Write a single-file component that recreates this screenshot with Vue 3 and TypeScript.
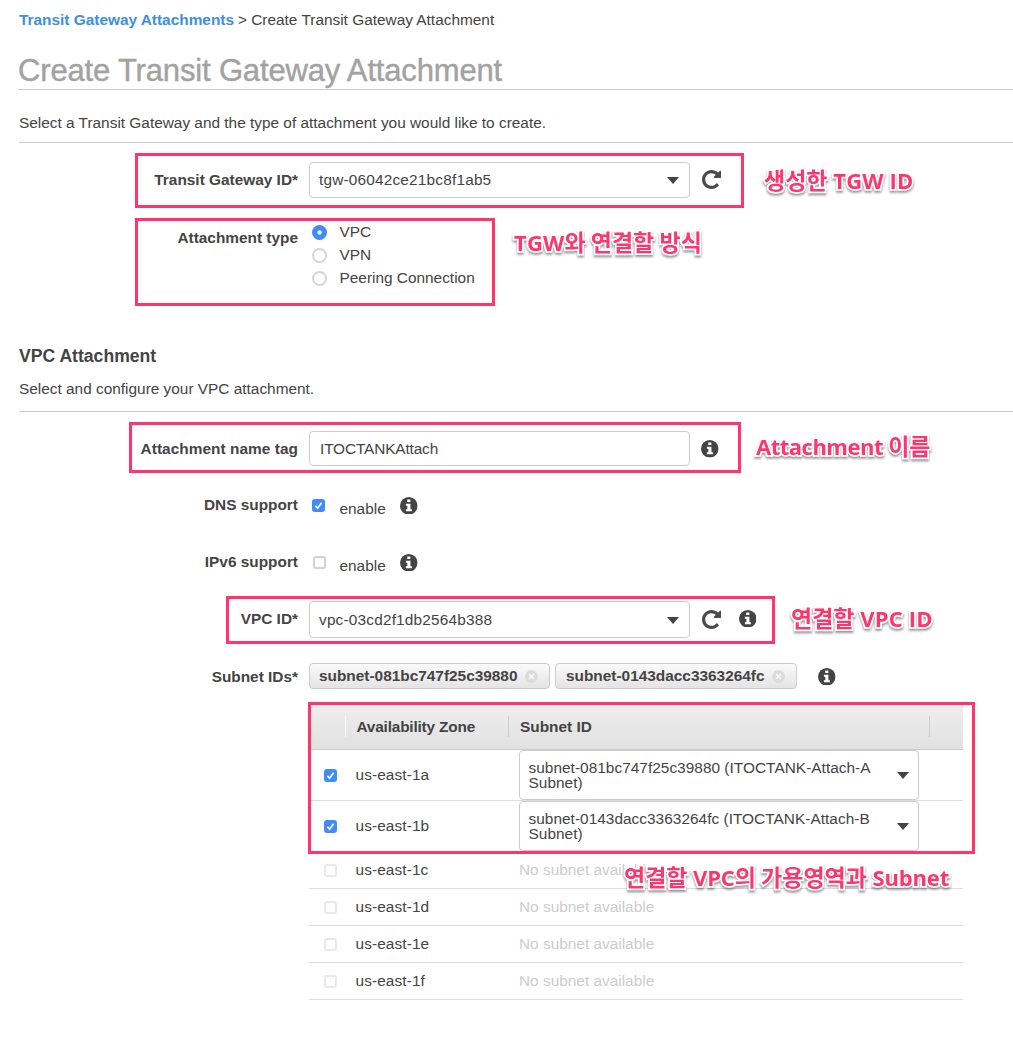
<script setup lang="ts">
interface Zone {
  name: string
  subnet?: string
}

const attachmentTypes = ['VPC', 'VPN', 'Peering Connection']
const selectedType = 'VPC'

const toggles = [
  { label: 'DNS support', checked: true },
  { label: 'IPv6 support', checked: false },
]

const tags = ['subnet-081bc747f25c39880', 'subnet-0143dacc3363264fc']

const zones: Zone[] = [
  { name: 'us-east-1a', subnet: 'subnet-081bc747f25c39880 (ITOCTANK-Attach-A Subnet)' },
  { name: 'us-east-1b', subnet: 'subnet-0143dacc3363264fc (ITOCTANK-Attach-B Subnet)' },
  { name: 'us-east-1c' },
  { name: 'us-east-1d' },
  { name: 'us-east-1e' },
  { name: 'us-east-1f' },
]
</script>

<template>
  <svg class="defs" width="0" height="0" aria-hidden="true">
    <symbol id="refresh" viewBox="128 128 1536 1536">
      <path d="M1664 256v448q0 26-19 45t-45 19h-448q-42 0-59-40-17-39 14-69l138-138q-148-137-349-137-104 0-198.500 40.500t-163.500 109.500-109.500 163.500-40.500 198.500 40.500 198.500 109.500 163.500 163.500 109.500 198.500 40.500q119 0 225-52t179-147q7-10 23-12 15 0 25 9l137 138q9 8 9.500 20.500t-7.500 22.500q-109 132-264 204.500t-327 72.500q-156 0-298-61t-245-164-164-245-61-298 61-298 164-245 245-164 298-61q147 0 284.500 55.500t244.500 156.500l130-129q29-31 70-14 39 17 39 59z" />
    </symbol>
    <symbol id="info" viewBox="0 0 18 18">
      <circle cx="9" cy="9" r="9" />
      <path fill="#fff" d="M7.400 2.500h3.200v2.700H7.400zM6 6.800h4.700v5.700h1.500v2.200H6v-2.200h1.500V8.900H6z" />
    </symbol>
    <symbol id="check" viewBox="0 0 13 13">
      <path d="M3.400 6.800l2.200 2.400 4-5.400" fill="none" stroke="#fff" stroke-width="1.700" />
    </symbol>
    <symbol id="remove" viewBox="0 0 13 13">
      <circle cx="6.500" cy="6.500" r="6.500" fill="#dcdcdc" />
      <path d="M4 4l5 5M9 4l-5 5" stroke="#fafafa" stroke-width="1.500" />
    </symbol>
  </svg>

  <main class="page">
    <nav class="crumbs"><a>Transit Gateway Attachments</a><span>&gt; Create Transit Gateway Attachment</span></nav>
    <h1><span>Create Transit Gateway Attachment</span></h1>
    <p class="lead first">Select a Transit Gateway and the type of attachment you would like to create.</p>

    <div class="row tgw">
      <label>Transit Gateway ID*</label>
      <div class="select"><span>tgw-06042ce21bc8f1ab5</span><i class="caret"></i></div>
      <svg class="refresh"><use href="#refresh" /></svg>
    </div>

    <div class="row types">
      <label>Attachment type</label>
      <ul>
        <li v-for="t in attachmentTypes" :key="t">
          <i class="radio" :class="{ on: t === selectedType }"></i><span>{{ t }}</span>
        </li>
      </ul>
    </div>

    <h2>VPC Attachment</h2>
    <p class="lead second">Select and configure your VPC attachment.</p>

    <div class="row name">
      <label>Attachment name tag</label>
      <div class="select input"><span>ITOCTANKAttach</span></div>
      <svg class="info"><use href="#info" /></svg>
    </div>

    <div v-for="t in toggles" :key="t.label" class="row toggle">
      <label>{{ t.label }}</label>
      <i class="box" :class="{ on: t.checked }"><svg v-if="t.checked"><use href="#check" /></svg></i>
      <span class="enable">enable</span>
      <svg class="info"><use href="#info" /></svg>
    </div>

    <div class="row vpc">
      <label>VPC ID*</label>
      <div class="select"><span>vpc-03cd2f1db2564b388</span><i class="caret"></i></div>
      <svg class="refresh"><use href="#refresh" /></svg>
      <svg class="info"><use href="#info" /></svg>
    </div>

    <div class="row subnets">
      <label>Subnet IDs*</label>
      <div class="tags">
        <div v-for="t in tags" :key="t" class="tag"><span>{{ t }}</span><svg><use href="#remove" /></svg></div>
      </div>
      <svg class="info"><use href="#info" /></svg>
    </div>

    <section class="table">
      <header>
        <div class="c1"></div>
        <div class="c2"><b>Availability Zone</b></div>
        <div class="c3"><b>Subnet ID</b></div>
        <div class="c4"></div>
      </header>
      <div v-for="z in zones" :key="z.name" class="tr" :class="{ active: z.subnet }">
        <i class="box" :class="z.subnet ? 'on' : 'off'"><svg v-if="z.subnet"><use href="#check" /></svg></i>
        <span class="zone">{{ z.name }}</span>
        <div v-if="z.subnet" class="select tall"><span>{{ z.subnet }}</span><i class="caret"></i></div>
        <span v-else class="none">No subnet available</span>
      </div>
    </section>

    <div class="mark m1"></div>
    <div class="mark m2"></div>
    <div class="mark m3"></div>
    <div class="mark m4"></div>
    <div class="mark m5"></div>
    <div class="note n1"><span class="ko">생성한</span> TGW ID</div>
    <div class="note n2">TGW<span class="ko">와 연결할 방식</span></div>
    <div class="note n3">Attachment <span class="ko">이름</span></div>
    <div class="note n4"><span class="ko">연결할</span> VPC ID</div>
    <div class="note n5"><span class="ko">연결할</span> VPC<span class="ko">의 가용영역과</span> Subnet</div>
  </main>
</template>

<style>
body {
  background: #fff;
}
</style>

<style scoped>
* {
  box-sizing: border-box;
}
.defs {
  position: absolute;
}
.page {
  position: relative;
  width: 1013px;
  height: 1038px;
  overflow: hidden;
  padding-left: 19px;
  color: #444;
  font: 15.400px/20px "Liberation Sans", Arial, sans-serif;
  white-space: nowrap;
}
h1, h2, p, ul {
  margin: 0;
  padding: 0;
}
.crumbs {
  height: 40px;
  padding-top: 10px;
  display: flex;
  gap: 4px;
}
.crumbs a {
  color: #3c8fe6;
  font-weight: 700;
}
h1 {
  height: 50px;
  margin-left: -1px;
  border-bottom: 1px solid #ccc;
  color: #a2a2a2;
  font-size: 31px;
  font-weight: 400;
  line-height: 61px;
  letter-spacing: -0.16px;
  -webkit-text-stroke: 0.4px #a2a2a2;
}
.lead {
  border-bottom: 1px solid #ccc;
}
.first {
  height: 53px;
  padding-top: 23px;
}
.row {
  display: flex;
  align-items: flex-start;
}
label {
  width: 279px;
  margin-right: 11px;
  text-align: right;
  font-weight: 700;
}
.select {
  position: relative;
  display: flex;
  align-items: center;
  width: 381px;
  height: 36px;
  padding-left: 9px;
  border: 1px solid #ccc;
  border-radius: 4px;
  background: #fff;
  letter-spacing: 0.18px;
}
.caret {
  position: absolute;
  right: 10px;
  top: 50%;
  margin-top: -3px;
  border: 6.500px solid transparent;
  border-top: 7px solid #444;
  border-bottom: 0;
}
.refresh {
  width: 19px;
  height: 19px;
  margin: 8px 0 0 12px;
  fill: #4a4a4a;
}
.info {
  width: 17.600px;
  height: 17.600px;
  fill: #444;
}
.tgw {
  height: 75px;
  padding-top: 19px;
}
.tgw label {
  padding-top: 8px;
}
.types {
  height: 128px;
}
.types label {
  padding-top: 10px;
}
ul {
  padding: 3px 0 0 3px;
  list-style: none;
}
li {
  display: flex;
  align-items: center;
  height: 23px;
}
li span {
  padding-bottom: 2px;
}
.radio {
  width: 15px;
  height: 15px;
  margin-right: 12.500px;
  border: 2px solid #d5d5d5;
  border-radius: 50%;
}
.radio.on {
  border: 0;
  background: radial-gradient(circle, #fff 1.700px, #3f8cfa 2.600px);
}
h2 {
  height: 33px;
  font-size: 17.600px;
  line-height: 20px;
}
.second {
  height: 33px;
}
.name {
  height: 74px;
  padding-top: 19px;
}
.name label {
  padding-top: 8px;
  letter-spacing: 0.05px;
}
.name .info {
  margin: 9px 0 0 11px;
}
.input {
  height: 35px;
  padding-left: 10px;
  letter-spacing: -0.14px;
}
.toggle {
  height: 57px;
  padding-top: 9px;
}
.box {
  width: 13px;
  height: 13px;
  border: 2px solid #d2d2d2;
  border-radius: 3px;
}
.box svg {
  display: block;
  width: 13px;
  height: 13px;
}
.box.on {
  border: 0;
  background: #3f8cfa;
}
.box.off {
  border-color: #e9e9e9;
}
.toggle .box {
  margin: 4px 13.500px 0 4px;
}
.toggle .box.on {
  margin: 4px 14.500px 0 3px;
}
.enable {
  width: 60.500px;
  padding-top: 4px;
}
.toggle .info {
  margin-top: 1.600px;
}
.vpc {
  height: 61px;
  padding-top: 1px;
}
.vpc .select {
  height: 37px;
}
.vpc label {
  padding-top: 8px;
}
.vpc .info {
  margin: 8.800px 0 0 17.500px;
}
.vpc .refresh {
  margin-top: 8.500px;
}
.subnets {
  height: 42px;
  padding-top: 2px;
}
.subnets label {
  padding-top: 4px;
}
.tags {
  display: flex;
  gap: 5px;
}
.tag {
  display: flex;
  align-items: center;
  justify-content: space-between;
  width: 241px;
  height: 26px;
  padding: 0 11px 0 9px;
  border: 1px solid #ccc;
  border-radius: 4px;
  background: linear-gradient(#fafafa, #e4e4e4);
  font-weight: 700;
}
.tag:last-child {
  width: 242px;
  padding-left: 10px;
}
.tag svg {
  width: 13px;
  height: 13px;
}
.subnets .info {
  margin: 4.500px 0 0 21.300px;
}
.table {
  width: 654px;
  margin-left: 290px;
}
header {
  display: flex;
  align-items: center;
  height: 47px;
  padding-top: 1px;
  border-bottom: 1px solid #ccc;
  background: linear-gradient(#efefef, #e1e1e1);
  letter-spacing: -0.19px;
}
header div {
  height: 21px;
  line-height: 22px;
  border-right: 1px solid #ccc;
}
header .c1 {
  width: 37px;
  border-color: #fafafa;
}
.c2 {
  width: 163px;
  padding-left: 10.500px;
}
.c3 {
  width: 421px;
  padding-left: 11px;
  letter-spacing: 0;
}
header .c4 {
  border: 0;
}
.tr {
  display: flex;
  align-items: center;
  height: 37px;
  padding-left: 15px;
  border-bottom: 1px solid #ddd;
}
.tr.active {
  height: 51px;
}
.tr.active:nth-child(3) {
  border-color: transparent;
}
.zone {
  width: 163.500px;
  margin-left: 18.500px;
  letter-spacing: 0.1px;
}
.tall {
  width: 400px;
  height: 50px;
  line-height: 15px;
  padding: 0 40px 0 8.500px;
  white-space: normal;
  letter-spacing: 0.03px;
}
.tall .caret {
  right: 9px;
}
.none {
  color: #ccc;
}
.mark {
  position: absolute;
  border: 3px solid #ff366e;
}
.m1 { left: 135px; top: 153px; width: 609px; height: 55px; }
.m2 { left: 135px; top: 218px; width: 360px; height: 88px; }
.m3 { left: 129px; top: 422px; width: 612px; height: 51px; }
.m4 { left: 226px; top: 596px; width: 549px; height: 48px; }
.m5 { left: 308px; top: 702px; width: 667px; height: 152px; }
.note {
  position: absolute;
  color: #ff366e;
  font: 700 22px/30px "Open Sans", "Noto Sans CJK KR", sans-serif;
  letter-spacing: 0.15px;
  -webkit-text-stroke: 3.500px #fff;
  paint-order: stroke fill;
  filter: drop-shadow(0 2px 1px rgba(0, 0, 0, 0.4));
}
.ko {
  font-family: "Noto Sans CJK KR", sans-serif;
  font-size: 23px;
  font-weight: 700;
  letter-spacing: 0;
}
.n1 { left: 764px; top: 164px; }
.n2 { left: 514px; top: 226px; }
.n3 { left: 756px; top: 430px; letter-spacing: -0.5px; }
.n4 { left: 791px; top: 602px; }
.n5 { left: 624px; top: 861px; letter-spacing: -0.15px; }
</style>
